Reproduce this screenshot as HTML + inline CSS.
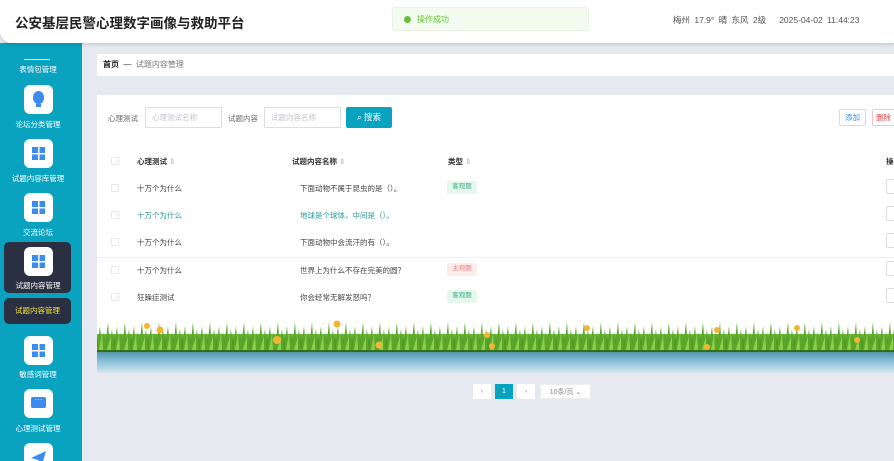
<!DOCTYPE html>
<html><head><meta charset="utf-8"><style>
*{margin:0;padding:0;box-sizing:border-box}
html,body{width:894px;height:461px;overflow:hidden}
body{background:#e6e9ef;font-family:"Liberation Sans","Noto Sans CJK SC",sans-serif;position:relative;font-size:8px;color:#555}
.hdr{position:absolute;left:0;top:0;width:894px;height:43px;background:#fff;border-bottom-left-radius:12px;box-shadow:0 2px 3px rgba(0,0,0,.12);z-index:3}
.title{position:absolute;left:15px;top:12px;font-size:13.5px;font-weight:bold;color:#222}
.toast{position:absolute;left:392px;top:7px;width:197px;height:24px;background:#f3faef;border:1px solid #e8f4e0;border-radius:3px}
.toast i{position:absolute;left:11px;top:8px;width:7px;height:7px;border-radius:50%;background:#67c23a}
.toast span{position:absolute;left:24px;top:6px;color:#67c23a;font-size:8px}
.wea{position:absolute;left:673px;top:14px;font-size:8.5px;color:#555;word-spacing:2px}
.side{position:absolute;left:0;top:43px;width:82px;height:418px;background:#0aa3bf}
.sline{position:absolute;left:24px;top:16px;width:26px;height:1px;background:#fff}
.lbl{position:absolute;left:0;width:76px;text-align:center;color:#fff;font-size:7.5px}
.ic{position:absolute;left:24px;width:29px;height:29px;background:#fff;border-radius:6px}
.grid{position:absolute;left:8px;top:8px;width:13px;height:13px;background:
linear-gradient(#fff,#fff) 6px 0/1.5px 13px no-repeat,linear-gradient(#fff,#fff) 0 6px/13px 1.5px no-repeat,#3b8cf0}
.act{position:absolute;left:4px;top:199px;width:67px;height:51px;background:#2a2f42;border-radius:5px}
.sub{position:absolute;left:4px;top:255px;width:67px;height:26px;background:#2a2f42;border-radius:5px;color:#f5e23b;font-size:7.5px;text-align:center;line-height:26px}
.bc{position:absolute;left:97px;top:54px;width:797px;height:22px;background:#fff;font-size:8px;line-height:22px;padding-left:6px;color:#222}
.bc span{color:#777}
.card{position:absolute;left:97px;top:95px;width:797px;height:278px;background:#fff}
.inp{position:absolute;top:12px;height:21px;border:1px solid #ddd;border-radius:2px;color:#c0c4cc;font-size:7.5px;line-height:19px;padding-left:6px}
.btn{position:absolute;left:249px;top:12px;width:46px;height:21px;background:#0aa3bf;color:#fff;border-radius:2px;font-size:8.5px;line-height:21px;text-align:center}
.t{position:absolute;font-size:7.5px;color:#444;white-space:nowrap}
.cb{position:absolute;left:14px;width:8px;height:8px;border:1px solid #e8e8e8;border-radius:1px}
.tag{position:absolute;left:350px;width:30px;height:13px;font-size:6.5px;line-height:12px;text-align:center;border-radius:2px}
.ob{position:absolute;left:789px;width:12px;height:15px;border:1px solid #ddd;border-radius:2px}
.pg{position:absolute;top:384px;height:15px;background:#fff;font-size:7px;line-height:15px;text-align:center;color:#888}
</style></head><body>
<div class="hdr"><div class="title">公安基层民警心理数字画像与救助平台</div>
<div class="toast"><i></i><span>操作成功</span></div>
<div class="wea">梅州 17.9° 晴 东风 2级 &nbsp; 2025-04-02 11:44:23</div></div>
<div class="side">
<div class="sline"></div><div class="lbl" style="top:21px">表情包管理</div>
<div class="ic" style="top:42px"><div style="position:absolute;left:9px;top:6px;width:11px;height:13px;background:#3b8cf0;border-radius:50% 50% 45% 45%"></div><div style="position:absolute;left:12px;top:19px;width:5px;height:3px;background:#3b8cf0"></div></div>
<div class="lbl" style="top:76px">论坛分类管理</div>
<div class="ic" style="top:96px"><div class="grid"></div></div><div class="lbl" style="top:130px">试题内容库管理</div>
<div class="ic" style="top:150px"><div class="grid"></div></div><div class="lbl" style="top:184px">交流论坛</div>
<div class="act"></div>
<div class="ic" style="top:204px"><div class="grid"></div></div><div class="lbl" style="top:237px">试题内容管理</div>
<div class="sub">试题内容管理</div>
<div class="ic" style="top:293px"><div class="grid"></div></div><div class="lbl" style="top:326px">敏感词管理</div>
<div class="ic" style="top:346px"><div style="position:absolute;left:7px;top:8px;width:15px;height:11px;background:#3b8cf0;border-radius:2px;color:#fff;font-size:8px;line-height:6px;text-align:center">···</div></div><div class="lbl" style="top:380px">心理测试管理</div>
<div class="ic" style="top:400px"><svg width="29" height="29" style="position:absolute;left:0;top:0"><path d="M7 15 L22 8 L18 22 L14 17 Z" fill="#3b8cf0"/></svg></div>
</div>
<div class="bc"><b style="font-weight:bold">首页</b> &nbsp;— &nbsp;<span>试题内容管理</span></div>
<div class="card">
<div class="t" style="left:11px;top:18px;color:#666">心理测试</div>
<div class="inp" style="left:48px;width:77px">心理测试名称</div>
<div class="t" style="left:131px;top:18px;color:#666">试题内容</div>
<div class="inp" style="left:167px;width:77px">试题内容名称</div>
<div class="btn">⌕ 搜索</div>
<div style="position:absolute;left:742px;top:14px;width:27px;height:17px;border:1px solid #c6dff7;border-radius:2px;color:#3b8cf0;font-size:7.5px;line-height:15px;text-align:center">添加</div>
<div style="position:absolute;left:775px;top:14px;width:30px;height:17px;border:1px solid #f5c6c6;border-radius:2px;color:#e04040;font-size:7.5px;line-height:15px;padding-left:3px">删除</div>
<div class="cb" style="top:62px"></div>
<div class="t" style="left:40px;top:61px;font-weight:bold;color:#333">心理测试 <span style="color:#ccc">⇕</span></div>
<div class="t" style="left:195px;top:61px;font-weight:bold;color:#333">试题内容名称 <span style="color:#ccc">⇕</span></div>
<div class="t" style="left:351px;top:61px;font-weight:bold;color:#333">类型 <span style="color:#ccc">⇕</span></div>
<div class="t" style="left:789px;top:61px;font-weight:bold;color:#333">操</div>
<div class="cb" style="top:89px"></div><div class="t" style="left:40px;top:88px">十万个为什么</div><div class="t" style="left:203px;top:88px">下面动物不属于昆虫的是（）。</div><div class="tag" style="top:86px;background:#e6f7f0;color:#3fae88">客观题</div><div class="ob" style="top:84px"></div>
<div class="cb" style="top:116px"></div><div class="t" style="left:40px;top:115px;color:#2a9a9a">十万个为什么</div><div class="t" style="left:203px;top:115px;color:#2a9a9a">地球是个球体，中间是（）。</div><div class="ob" style="top:111px"></div>
<div class="cb" style="top:143px"></div><div class="t" style="left:40px;top:142px">十万个为什么</div><div class="t" style="left:203px;top:142px">下面动物中会流汗的有（）。</div><div class="ob" style="top:138px"></div>
<div style="position:absolute;left:0;top:162px;width:797px;height:1px;background:#eee"></div>
<div class="cb" style="top:171px"></div><div class="t" style="left:40px;top:170px">十万个为什么</div><div class="t" style="left:203px;top:170px">世界上为什么不存在完美的圆？</div><div class="tag" style="top:168px;background:#fdecec;color:#f08080">主观题</div><div class="ob" style="top:166px"></div>
<div class="cb" style="top:198px"></div><div class="t" style="left:40px;top:197px">狂躁症测试</div><div class="t" style="left:203px;top:197px">你会经常无解发怒吗？</div><div class="tag" style="top:195px;background:#e6f7f0;color:#3fae88">客观题</div><div class="ob" style="top:193px"></div>
<svg style="position:absolute;left:0;top:225px" width="797" height="53">
<defs><linearGradient id="w" x1="0" y1="0" x2="0" y2="1"><stop offset="0" stop-color="#4e8fa8"/><stop offset=".45" stop-color="#86c0d6"/><stop offset="1" stop-color="#d5e6ef"/></linearGradient>
<linearGradient id="gg" x1="0" y1="0" x2="0" y2="1"><stop offset="0" stop-color="#6fb83a"/><stop offset="1" stop-color="#2f6a16"/></linearGradient>
<pattern id="g" width="17" height="30" patternUnits="userSpaceOnUse"><path d="M0 30 L3 6 L5 30 M4 30 L7 12 L9 30 M8 30 L11 2 L13 30 M12 30 L15 9 L17 30" fill="#5aa82a"/><path d="M2 30 L5 14 L6 30 M10 30 L14 16 L14 30" fill="#8ccf4c"/></pattern></defs>
<rect x="0" y="31" width="797" height="22" fill="url(#w)"/>
<rect x="0" y="14" width="797" height="18" fill="url(#gg)"/>
<rect x="0" y="2" width="797" height="30" fill="url(#g)"/>
<g fill="#f3b632"><circle cx="50" cy="6" r="3"/><circle cx="63" cy="10" r="3.5"/><circle cx="180" cy="20" r="4"/><circle cx="240" cy="4" r="3.5"/><circle cx="282" cy="25" r="3.5"/><circle cx="390" cy="15" r="3"/><circle cx="395" cy="26" r="3"/><circle cx="490" cy="8" r="3"/><circle cx="610" cy="27" r="3"/><circle cx="620" cy="10" r="3"/><circle cx="700" cy="8" r="3"/><circle cx="760" cy="20" r="3"/></g>
</svg>
</div>
<div class="pg" style="left:473px;width:18px">‹</div>
<div class="pg" style="left:495px;width:18px;background:#0aa3bf;color:#fff">1</div>
<div class="pg" style="left:517px;width:18px">›</div>
<div class="pg" style="left:540px;width:51px;border:1px solid #eee">10条/页 ⌄</div>
</body></html>
